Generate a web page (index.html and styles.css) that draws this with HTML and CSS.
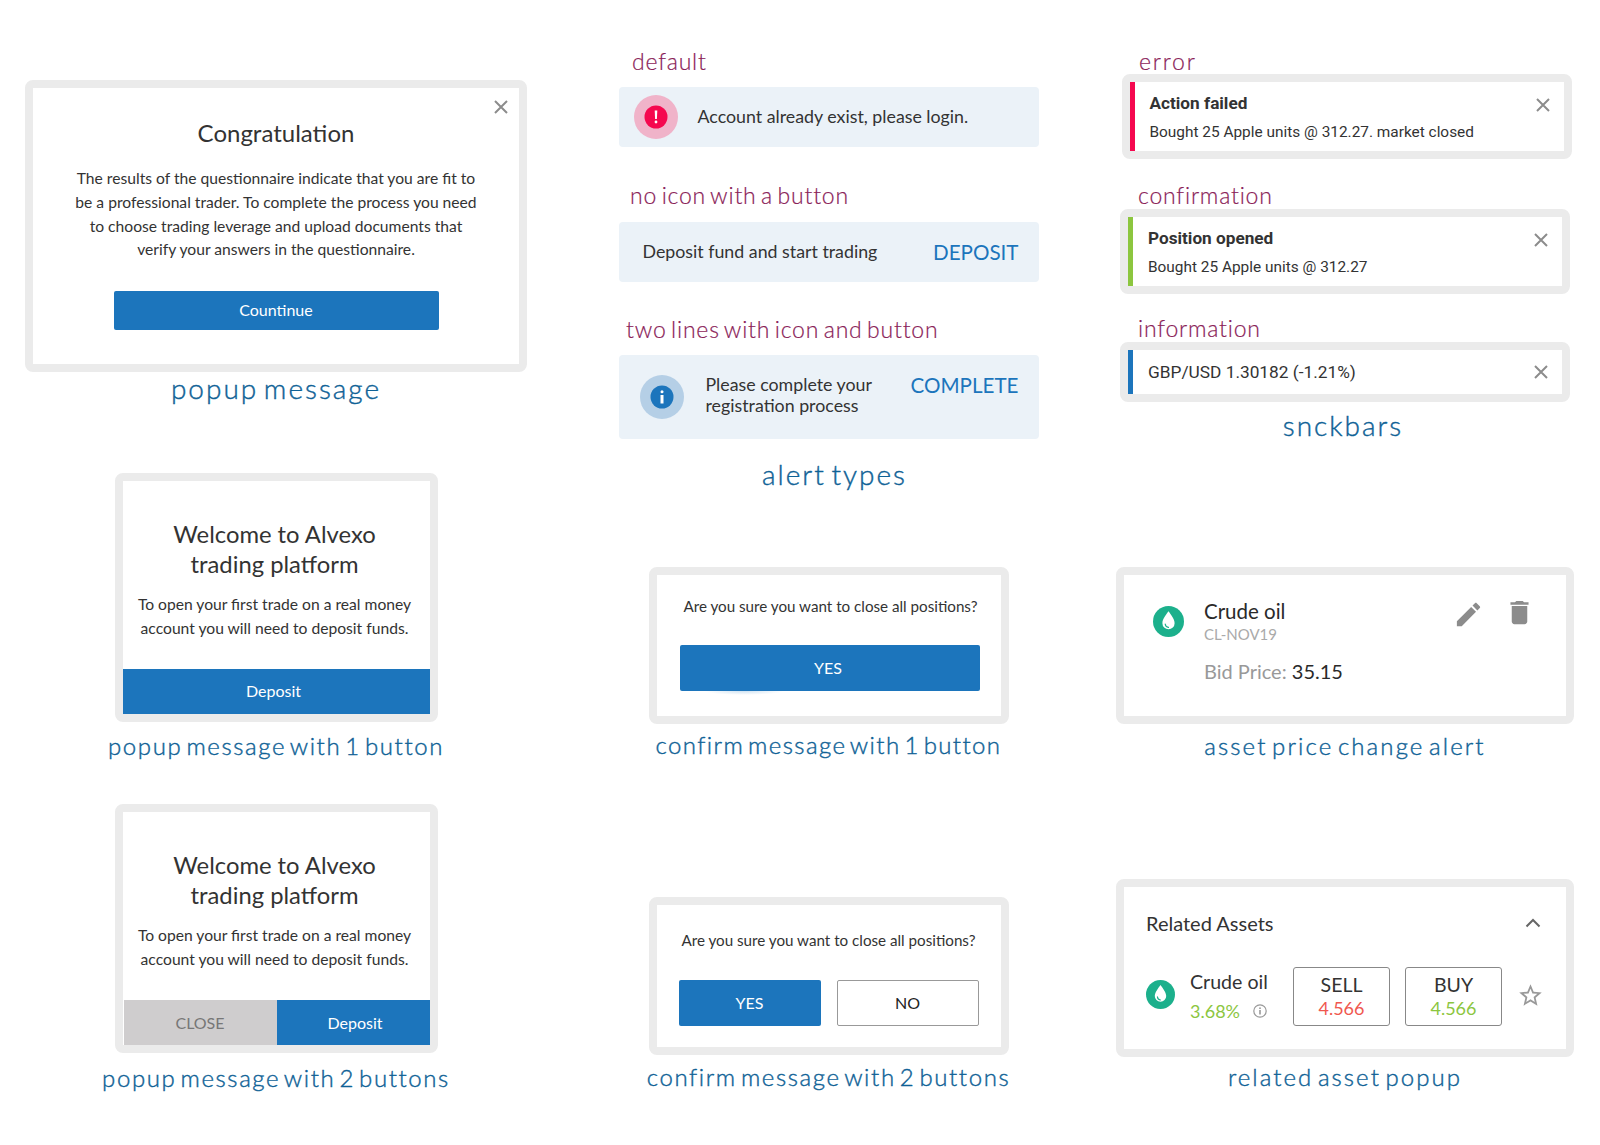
FILE: index.html
```html
<!DOCTYPE html>
<html lang="en">
<head>
    <meta charset="UTF-8">
    <title>Alvexo message components</title>
    <link rel="stylesheet" href="styles.css">
</head>
<body>
    <div class="sheet">
        <div class="col">
            <div class="card popup-main">
                <svg class="close close-popup" viewBox="0 0 14 14"><path d="M1 1l12 12M13 1L1 13"/></svg>
                <h2 class="popup-title">Congratulation</h2>
                <p class="popup-text">The results of the questionnaire indicate that you are fit to<br>be a professional trader. To complete the process you need<br>to choose trading leverage and upload documents that<br>verify your answers in the questionnaire.</p>
                <button class="btn btn-continue">Countinue</button>
            </div>
            <div class="caption caption-big caption-first">popup message</div>

            <div class="card popup-small popup-one">
                <h2 class="popup-title">Welcome to Alvexo<br>trading platform</h2>
                <p class="popup-text">To open your first trade on a real money<br>account you will need to deposit funds.</p>
                <div class="popup-actions">
                    <button class="btn btn-full">Deposit</button>
                </div>
            </div>
            <div class="caption caption-one">popup message with 1 button</div>

            <div class="card popup-small popup-two">
                <h2 class="popup-title">Welcome to Alvexo<br>trading platform</h2>
                <p class="popup-text">To open your first trade on a real money<br>account you will need to deposit funds.</p>
                <div class="popup-actions">
                    <button class="btn btn-grey">CLOSE</button>
                    <button class="btn btn-half">Deposit</button>
                </div>
            </div>
            <div class="caption caption-two">popup message with 2 buttons</div>
        </div>

        <div class="col">
            <div class="tag tag-default">default</div>
            <div class="alert alert-default">
                <svg class="alert-icon" viewBox="0 0 44 44">
                    <circle cx="22" cy="22" r="22" fill="#f0b3c9"/>
                    <circle cx="22" cy="22" r="11.5" fill="#f5084f"/>
                    <path d="M20.7 15.5h2.6l-.4 8.5h-1.8z" fill="#fff"/>
                    <circle cx="22" cy="27" r="1.4" fill="#fff"/>
                </svg>
                <span class="alert-text">Account already exist, please login.</span>
            </div>

            <div class="tag tag-button">no icon with a button</div>
            <div class="alert alert-button">
                <span class="alert-text">Deposit fund and start trading</span>
                <span class="alert-action">DEPOSIT</span>
            </div>

            <div class="tag tag-lines">two lines with icon and button</div>
            <div class="alert alert-lines">
                <svg class="alert-icon" viewBox="0 0 44 44">
                    <circle cx="22" cy="22" r="22" fill="#b5cfe6"/>
                    <circle cx="22" cy="22" r="11.5" fill="#1c75bc"/>
                    <circle cx="22" cy="16.8" r="1.5" fill="#fff"/>
                    <path d="M20.5 20h3v8.5h-3z" fill="#fff"/>
                </svg>
                <span class="alert-text">Please complete your<br>registration process</span>
                <span class="alert-action">COMPLETE</span>
            </div>
            <div class="caption caption-big caption-alerts">alert types</div>

            <div class="card confirm confirm-one">
                <p class="confirm-text">Are you sure you want to close all positions?</p>
                <button class="btn btn-yes-wide">YES</button>
            </div>
            <div class="caption caption-confirm-one">confirm message with 1 button</div>

            <div class="card confirm confirm-two">
                <p class="confirm-text">Are you sure you want to close all positions?</p>
                <div class="confirm-actions">
                    <button class="btn btn-yes">YES</button>
                    <button class="btn btn-no">NO</button>
                </div>
            </div>
            <div class="caption caption-confirm-two">confirm message with 2 buttons</div>
        </div>

        <div class="col">
            <div class="tag tag-error">error</div>
            <div class="card snack snack-error">
                <span class="snack-bar bar-red"></span>
                <div class="snack-body">
                    <div class="snack-title">Action failed</div>
                    <div class="snack-text">Bought 25 Apple units @ 312.27. market closed</div>
                </div>
                <svg class="close" viewBox="0 0 14 14"><path d="M1 1l12 12M13 1L1 13"/></svg>
            </div>

            <div class="tag tag-confirmation">confirmation</div>
            <div class="card snack">
                <span class="snack-bar bar-green"></span>
                <div class="snack-body">
                    <div class="snack-title">Position opened</div>
                    <div class="snack-text">Bought 25 Apple units @ 312.27</div>
                </div>
                <svg class="close" viewBox="0 0 14 14"><path d="M1 1l12 12M13 1L1 13"/></svg>
            </div>

            <div class="tag tag-information">information</div>
            <div class="card snack snack-info">
                <span class="snack-bar bar-blue"></span>
                <div class="snack-body">
                    <div class="snack-line">GBP/USD 1.30182 (-1.21%)</div>
                </div>
                <svg class="close" viewBox="0 0 14 14"><path d="M1 1l12 12M13 1L1 13"/></svg>
            </div>
            <div class="caption caption-big caption-snack">snckbars</div>

            <div class="card asset">
                <svg class="drop drop-large" viewBox="0 0 32 32">
                    <circle cx="16" cy="16" r="16" fill="#1cb08c"/>
                    <path d="M16 5.5c-2.5 3.6-6.3 8.3-6.3 12.2a6.3 6.3 0 0 0 12.6 0c0-3.9-3.8-8.6-6.3-12.2z" fill="#fff"/>
                    <path d="M12.6 18.6c.2 2 1.6 3.2 3.4 3.4" fill="none" stroke="#1cb08c" stroke-width="1.2" stroke-linecap="round"/>
                </svg>
                <div class="asset-info">
                    <div class="asset-name">Crude oil</div>
                    <div class="asset-code">CL-NOV19</div>
                    <div class="asset-bid">Bid Price: <span class="asset-price">35.15</span></div>
                </div>
                <div class="asset-tools">
                    <svg class="tool tool-edit" viewBox="0 0 24 24"><path d="M3 17.25V21h3.75L17.81 9.94l-3.75-3.75L3 17.25zM20.71 7.04c.39-.39.39-1.02 0-1.41l-2.34-2.34c-.39-.39-1.02-.39-1.41 0l-1.83 1.83 3.75 3.75 1.83-1.83z"/></svg>
                    <svg class="tool" viewBox="0 0 24 24"><path d="M6 19c0 1.1.9 2 2 2h8c1.1 0 2-.9 2-2V7H6v12zM19 4h-3.5l-1-1h-5l-1 1H5v2h14V4z"/></svg>
                </div>
            </div>
            <div class="caption caption-asset">asset price change alert</div>

            <div class="card related">
                <div class="related-head">
                    <span class="related-title">Related Assets</span>
                    <svg class="chevron" viewBox="0 0 16 10"><path d="M1.5 8.5L8 2l6.5 6.5"/></svg>
                </div>
                <div class="related-row">
                    <svg class="drop drop-small" viewBox="0 0 32 32">
                        <circle cx="16" cy="16" r="16" fill="#1cb08c"/>
                        <path d="M16 5.5c-2.5 3.6-6.3 8.3-6.3 12.2a6.3 6.3 0 0 0 12.6 0c0-3.9-3.8-8.6-6.3-12.2z" fill="#fff"/>
                        <path d="M12.6 18.6c.2 2 1.6 3.2 3.4 3.4" fill="none" stroke="#1cb08c" stroke-width="1.2" stroke-linecap="round"/>
                    </svg>
                    <div class="related-info">
                        <div class="related-name">Crude oil</div>
                        <div class="related-change">
                            <span class="change-value">3.68%</span>
                            <svg class="info" viewBox="0 0 14 14">
                                <circle cx="7" cy="7" r="6.2" fill="none" stroke="#999" stroke-width="1.2"/>
                                <circle cx="7" cy="4.2" r=".9" fill="#999"/>
                                <path d="M6.2 6h1.6v4.4H6.2z" fill="#999"/>
                            </svg>
                        </div>
                    </div>
                    <div class="trade">
                        <span class="trade-label">SELL</span>
                        <span class="trade-price price-red">4.566</span>
                    </div>
                    <div class="trade">
                        <span class="trade-label">BUY</span>
                        <span class="trade-price price-green">4.566</span>
                    </div>
                    <svg class="star" viewBox="0 0 24 24"><path d="M22 9.24l-7.19-.62L12 2 9.19 8.63 2 9.24l5.46 4.73L5.82 21 12 17.27 18.18 21l-1.63-7.03L22 9.24zM12 15.4l-3.76 2.27 1-4.28-3.32-2.88 4.38-.38L12 6.1l1.71 4.04 4.38.38-3.32 2.88 1 4.28L12 15.4z"/></svg>
                </div>
            </div>
            <div class="caption caption-related">related asset popup</div>
        </div>
    </div>
</body>
</html>
```
FILE: styles.css
```css
:root {
    --frame: #ebebeb;
    --text-dark: #333333;
    --blue: #1c75bc;
    --alert-bg: #ebf2f8;
    --caption: #0f6296;
    --tag: #8a2258;
    --grey-icon: #8c8c8c;
    --green: #8cc63f;
    --red: #f5084f;
}

* {
    box-sizing: border-box;
}

body {
    margin: 0;
    background-color: #ffffff;
    color: var(--text-dark);
    font-family: Lato, sans-serif;
    width: 1600px;
    height: 1145px;
    overflow: hidden;
}

p, h2 {
    margin: 0;
}

.sheet {
    display: grid;
    grid-template-columns: 552px 553px 480px;
}

.col {
    display: flex;
    flex-direction: column;
    align-items: center;
}

.col:first-child {
    padding-top: 80px;
}

.col:nth-child(2) {
    padding-top: 52px;
}

.col:nth-child(3) {
    padding-top: 53px;
}

/* grey frame round every specimen */
.card {
    position: relative;
    flex-shrink: 0;
    border: 8px solid var(--frame);
    border-radius: 8px;
    background-color: #ffffff;
}

/* blue captions */
.caption {
    font-weight: 300;
    font-size: 24px;
    line-height: 26px;
    padding-bottom: 4px;
    letter-spacing: 1.6px;
    word-spacing: -4px;
    color: var(--caption);
    white-space: nowrap;
    -webkit-text-stroke: 0.4px var(--caption);
}

.caption-big {
    font-size: 28px;
    letter-spacing: 2px;
}

.caption-first { margin-top: 3px; }
.caption-one { margin-top: 11px; }
.caption-two { margin-top: 12px; }
.caption-alerts { margin-top: 22px; margin-bottom: 1px; margin-left: 12px; }
.caption-confirm-one { margin-top: 8px; letter-spacing: 1.4px; }
.caption-confirm-two { margin-top: 9px; }
.caption-snack { margin-top: 10px; margin-left: -4px; }
.caption-asset { margin-top: 9px; letter-spacing: 2.1px; }
.caption-related { margin-top: 7px; letter-spacing: 2.06px; }

/* purple tags */
.tag {
    align-self: flex-start;
    font-weight: 300;
    font-size: 23px;
    line-height: 17px;
    padding-bottom: 3px;
    letter-spacing: 0.8px;
    word-spacing: -2.5px;
    color: var(--tag);
    white-space: nowrap;
    margin-bottom: 15px;
    -webkit-text-stroke: 0.2px var(--tag);
}

.tag-default { margin-left: 80px; margin-top: 1px; margin-bottom: 14px; }
.tag-button { margin-left: 78px; margin-top: 40px; }
.tag-lines { margin-left: 74px; margin-top: 39px; margin-bottom: 13.5px; }

.col:nth-child(3) .tag {
    margin-left: 33px;
    margin-bottom: 2px;
}

.col:nth-child(3) .tag-error {
    margin-left: 34px;
    margin-bottom: 1px;
    letter-spacing: 1.8px;
}

.col:nth-child(3) .tag-confirmation { margin-top: 28px; }
.col:nth-child(3) .tag-information { margin-top: 26px; }

/* buttons */
.btn {
    display: block;
    border: none;
    border-radius: 2px;
    background-color: var(--blue);
    color: #ffffff;
    font-family: Lato, sans-serif;
    font-size: 16px;
    padding: 0 0 2px;
}

/* popups */
.popup-main {
    width: 502px;
    height: 292px;
    padding-top: 30px;
    display: flex;
    flex-direction: column;
    align-items: center;
    text-align: center;
}

.popup-main .popup-title {
    font-size: 24px;
    margin-bottom: 19px;
}

.popup-main .popup-text {
    line-height: 23.8px;
}

.popup-title {
    font-weight: 400;
    font-size: 23.8px;
    line-height: 30px;
}

.popup-text {
    font-size: 15.65px;
    line-height: 24px;
}

.close {
    width: 14px;
    height: 14px;
    flex-shrink: 0;
    fill: none;
    stroke: var(--grey-icon);
    stroke-width: 2;
}

.close-popup {
    position: absolute;
    top: 12px;
    right: 11px;
}

.btn-continue {
    width: 325px;
    height: 39px;
    margin-top: 29px;
}

.popup-small {
    width: 323px;
    height: 249px;
    padding-top: 38px;
    display: flex;
    flex-direction: column;
    text-align: center;
}

.popup-small .popup-title,
.popup-small .popup-text {
    padding-right: 3px;
}

.popup-small .popup-text {
    margin-top: 13px;
}

.popup-one { margin-top: 68px; }
.popup-two { margin-top: 41px; }

.popup-actions {
    display: flex;
    margin-top: auto;
}

.btn-full {
    width: 100%;
    height: 45px;
    border-radius: 0;
    padding-right: 5px;
}

.btn-grey {
    width: 153px;
    height: 45px;
    border-radius: 0;
    margin-left: 1px;
    padding: 0;
    background-color: #cfcdce;
    color: #777777;
}

.btn-half {
    flex: 1;
    height: 45px;
    border-radius: 0;
    padding: 0 0 0 4px;
}

/* alerts */
.alert {
    display: flex;
    align-items: center;
    width: 420px;
    height: 60px;
    flex-shrink: 0;
    border-radius: 4px;
    background-color: var(--alert-bg);
}

.alert-icon {
    width: 44px;
    height: 44px;
    flex-shrink: 0;
}

.alert-text {
    font-size: 17.8px;
    line-height: 21px;
    padding-bottom: 2px;
}

.alert-action {
    margin-left: auto;
    font-size: 20.6px;
    color: var(--blue);
}

.alert-default {
    padding-left: 15px;
}

.alert-default .alert-text {
    margin-left: 20px;
}

.alert-button {
    padding: 0 20px 0 24px;
}

.alert-lines {
    height: 84px;
    padding: 0 20px 0 21px;
}

.alert-lines .alert-text {
    margin-left: 22px;
    padding-bottom: 4px;
}

.alert-lines .alert-action {
    margin-bottom: 24px;
}

/* confirm messages */
.confirm {
    width: 360px;
    text-align: center;
}

.confirm-text {
    font-size: 15.2px;
    line-height: 24px;
    white-space: nowrap;
}

.confirm-one {
    height: 157px;
    margin-top: 75px;
    padding: 19px 0 0 23px;
}

.confirm-one .confirm-text {
    padding-right: 19px;
}

.confirm-two {
    height: 158px;
    margin-top: 135px;
    padding: 23px 0 0 22px;
}

.confirm-two .confirm-text {
    padding-right: 22px;
}

.btn-yes-wide {
    position: relative;
    width: 300px;
    height: 46px;
    margin-top: 27px;
    padding: 0 3px 0 0;
}

/* the soft glow under the YES button */
.btn-yes-wide::after {
    content: "";
    position: absolute;
    left: 24px;
    bottom: -4px;
    width: 80px;
    height: 4px;
    background: radial-gradient(ellipse at 50% 0, #cfe2f1, #ffffff 70%);
}

.confirm-actions {
    display: flex;
    gap: 16px;
    margin-top: 28px;
}

.btn-yes {
    width: 142px;
    height: 46px;
    padding: 0;
}

.btn-no {
    width: 142px;
    height: 46px;
    padding: 0;
    border: 1.5px solid #999999;
    background-color: #ffffff;
    color: #222222;
}

/* snackbars */
.snack {
    display: flex;
    width: 450px;
    height: 85px;
}

.snack-error {
    margin-left: 3px;
}

.snack-info {
    height: 60px;
    align-items: stretch;
}

.snack-bar {
    width: 5px;
    flex-shrink: 0;
}

.bar-red { background-color: var(--red); }
.bar-green { background-color: var(--green); }
.bar-blue { background-color: var(--blue); }

.snack-body {
    flex: 1;
    padding: 11px 0 0 15px;
    font-family: Roboto, sans-serif;
}

.snack-title {
    font-weight: 700;
    font-size: 17.2px;
    line-height: 20px;
}

.snack-text {
    margin-top: 9px;
    font-size: 15.4px;
    line-height: 20px;
}

.snack-info .snack-body {
    padding-top: 0;
    display: flex;
    align-items: center;
}

.snack-line {
    font-size: 17.3px;
}

.snack .close {
    margin: 16px 14px 0 0;
}

.snack-info .close {
    margin-top: 15px;
}

/* asset cards */
.asset {
    display: flex;
    align-items: flex-start;
    width: 458px;
    height: 157px;
    margin-top: 125px;
    padding: 24px 31px 0 29px;
}

.drop {
    flex-shrink: 0;
}

.drop-large {
    width: 31px;
    height: 31px;
    margin-top: 7px;
}

.drop-small {
    width: 29px;
    height: 29px;
    margin-bottom: 4px;
}

.asset-info {
    margin-left: 20px;
}

.asset-name {
    font-size: 20.5px;
    line-height: 24px;
    color: #2a2a2a;
}

.asset-code {
    margin-top: 2px;
    font-size: 15px;
    line-height: 18px;
    color: #aaaaaa;
}

.asset-bid {
    margin-top: 16px;
    font-size: 20px;
    line-height: 24px;
    color: #999999;
}

.asset-price {
    color: #2a2a2a;
}

.asset-tools {
    display: flex;
    gap: 20px;
    margin-left: auto;
    margin-top: -2px;
}

.tool {
    width: 31px;
    height: 31px;
    fill: var(--grey-icon);
}

.tool-edit {
    margin-top: 2px;
}

.related {
    width: 458px;
    height: 178px;
    margin-top: 116px;
    padding: 24px 0 0 22px;
}

.related-head {
    display: flex;
    align-items: center;
    justify-content: space-between;
    height: 24px;
    padding-right: 25px;
}

.related-title {
    font-size: 20px;
}

.chevron {
    width: 16px;
    height: 10px;
    fill: none;
    stroke: #666666;
    stroke-width: 2;
}

.related-row {
    display: flex;
    align-items: center;
    height: 59px;
    margin-top: 32px;
}

.related-info {
    width: 103px;
    margin-left: 15px;
}

.related-name {
    font-size: 19.6px;
    line-height: 24px;
}

.related-change {
    display: flex;
    align-items: center;
    margin-top: 5px;
    height: 24px;
}

.change-value {
    font-size: 18px;
    color: var(--green);
}

.info {
    width: 14px;
    height: 14px;
    margin-left: 13px;
}

.trade {
    display: flex;
    flex-direction: column;
    align-items: center;
    width: 97px;
    height: 59px;
    margin-right: 15px;
    padding-top: 5px;
    border: 1.5px solid #888888;
    border-radius: 3px;
}

.trade-label {
    font-size: 19.5px;
    line-height: 24px;
}

.trade-price {
    font-size: 18px;
    line-height: 22px;
}

.price-red { color: #f0584f; }
.price-green { color: var(--green); }

.star {
    width: 27px;
    height: 27px;
    margin-bottom: 2px;
    fill: #999999;
}
```
